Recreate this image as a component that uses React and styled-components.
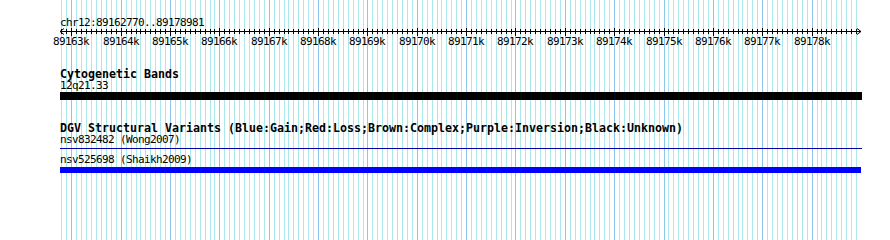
import React from 'react';
import styled, { createGlobalStyle } from 'styled-components';

const START = 89162770;
const END = 89178981;
const LEFT = 60;
const TRACK_WIDTH = 800;

const toX = (bp) => Math.round(LEFT + ((bp - START) * TRACK_WIDTH) / (END - START));

const gridPositions = [];
for (let bp = Math.ceil(START / 100) * 100; bp <= END; bp += 100) {
  gridPositions.push({ bp, x: toX(bp), major: bp % 1000 === 0 });
}

const GlobalStyle = createGlobalStyle`
  body {
    margin: 0;
    background: #ffffff;
  }
`;

const Panel = styled.div`
  position: relative;
  width: 890px;
  height: 240px;
  overflow: hidden;
  background: #ffffff;
  font-family: 'DejaVu Sans Mono', 'Liberation Mono', monospace;
  color: #000000;
`;

const GridLayer = styled.svg`
  position: absolute;
  left: 0;
  top: 0;
  width: 890px;
  height: 240px;
`;

const Tracks = styled.div`
  position: relative;
  padding-left: ${LEFT}px;
  display: flex;
  flex-direction: column;
  align-items: flex-start;
`;

const SmallLabel = styled.div`
  font-size: 11px;
  letter-spacing: -0.62px;
  line-height: 9px;
  height: 9px;
  white-space: pre;
  margin-top: ${(p) => p.$gap || 0}px;
`;

const TrackTitle = styled.div`
  font-size: 11.63px;
  font-weight: bold;
  line-height: 14px;
  height: 14px;
  white-space: pre;
  margin-top: ${(p) => p.$gap || 0}px;
`;

const RulerSvg = styled.svg`
  display: block;
  width: 890px;
  height: 19px;
  margin-left: -${LEFT}px;
  margin-top: 1px;
  overflow: visible;
`;

const Feature = styled.div`
  width: ${(p) => p.$width}px;
  height: ${(p) => p.$height}px;
  background: ${(p) => p.$color};
  margin-top: ${(p) => p.$gap || 0}px;
`;

const Grid = () => (
  <GridLayer viewBox="0 0 890 240">
    {gridPositions.map((g) => (
      <line
        key={g.bp}
        x1={g.x + 0.5}
        x2={g.x + 0.5}
        y1={0}
        y2={240}
        stroke={g.major ? '#8cc6ee' : '#aae8ec'}
        strokeWidth={1}
        shapeRendering="crispEdges"
      />
    ))}
  </GridLayer>
);

const Ruler = () => {
  const right = LEFT + TRACK_WIDTH + 1;
  return (
    <RulerSvg viewBox="0 0 890 19">
      <line x1={LEFT} x2={right} y1={3.5} y2={3.5} stroke="#000" shapeRendering="crispEdges" />
      <polyline points={`${LEFT + 4},0.5 ${LEFT},3.5 ${LEFT + 4},6.5`} fill="none" stroke="#000" />
      <polyline points={`${right - 4},0.5 ${right},3.5 ${right - 4},6.5`} fill="none" stroke="#000" />
      {gridPositions.map((g) => (
        <line
          key={g.bp}
          x1={g.x + 0.5}
          x2={g.x + 0.5}
          y1={g.major ? 0 : 1}
          y2={g.major ? 8 : 6}
          stroke="#000"
          shapeRendering="crispEdges"
        />
      ))}
      {gridPositions
        .filter((g) => g.major)
        .map((g) => (
          <text
            key={g.bp}
            x={g.x}
            y={17}
            textAnchor="middle"
            fontSize="11"
            letterSpacing="-0.62"
            fontFamily="'DejaVu Sans Mono', 'Liberation Mono', monospace"
            fill="#000"
          >
            {`${g.bp / 1000}k`}
          </text>
        ))}
    </RulerSvg>
  );
};

const App = () => (
  <>
    <GlobalStyle />
    <Panel>
      <Grid />
      <Tracks>
        <SmallLabel $gap={18}>chr12:89162770..89178981</SmallLabel>
        <Ruler />

        <TrackTitle $gap={20}>Cytogenetic Bands</TrackTitle>
        <SmallLabel>12q21.33</SmallLabel>
        <Feature $gap={2} $width={802} $height={8} $color="#000000" />

        <TrackTitle $gap={21}>
          DGV Structural Variants (Blue:Gain;Red:Loss;Brown:Complex;Purple:Inversion;Black:Unknown)
        </TrackTitle>
        <SmallLabel>nsv832482 (Wong2007)</SmallLabel>
        <Feature $gap={4} $width={802} $height={1} $color="#0000a8" />
        <SmallLabel $gap={6}>nsv525698 (Shaikh2009)</SmallLabel>
        <Feature $gap={3} $width={801} $height={6} $color="#0000ff" />
      </Tracks>
    </Panel>
  </>
);

export default App;
